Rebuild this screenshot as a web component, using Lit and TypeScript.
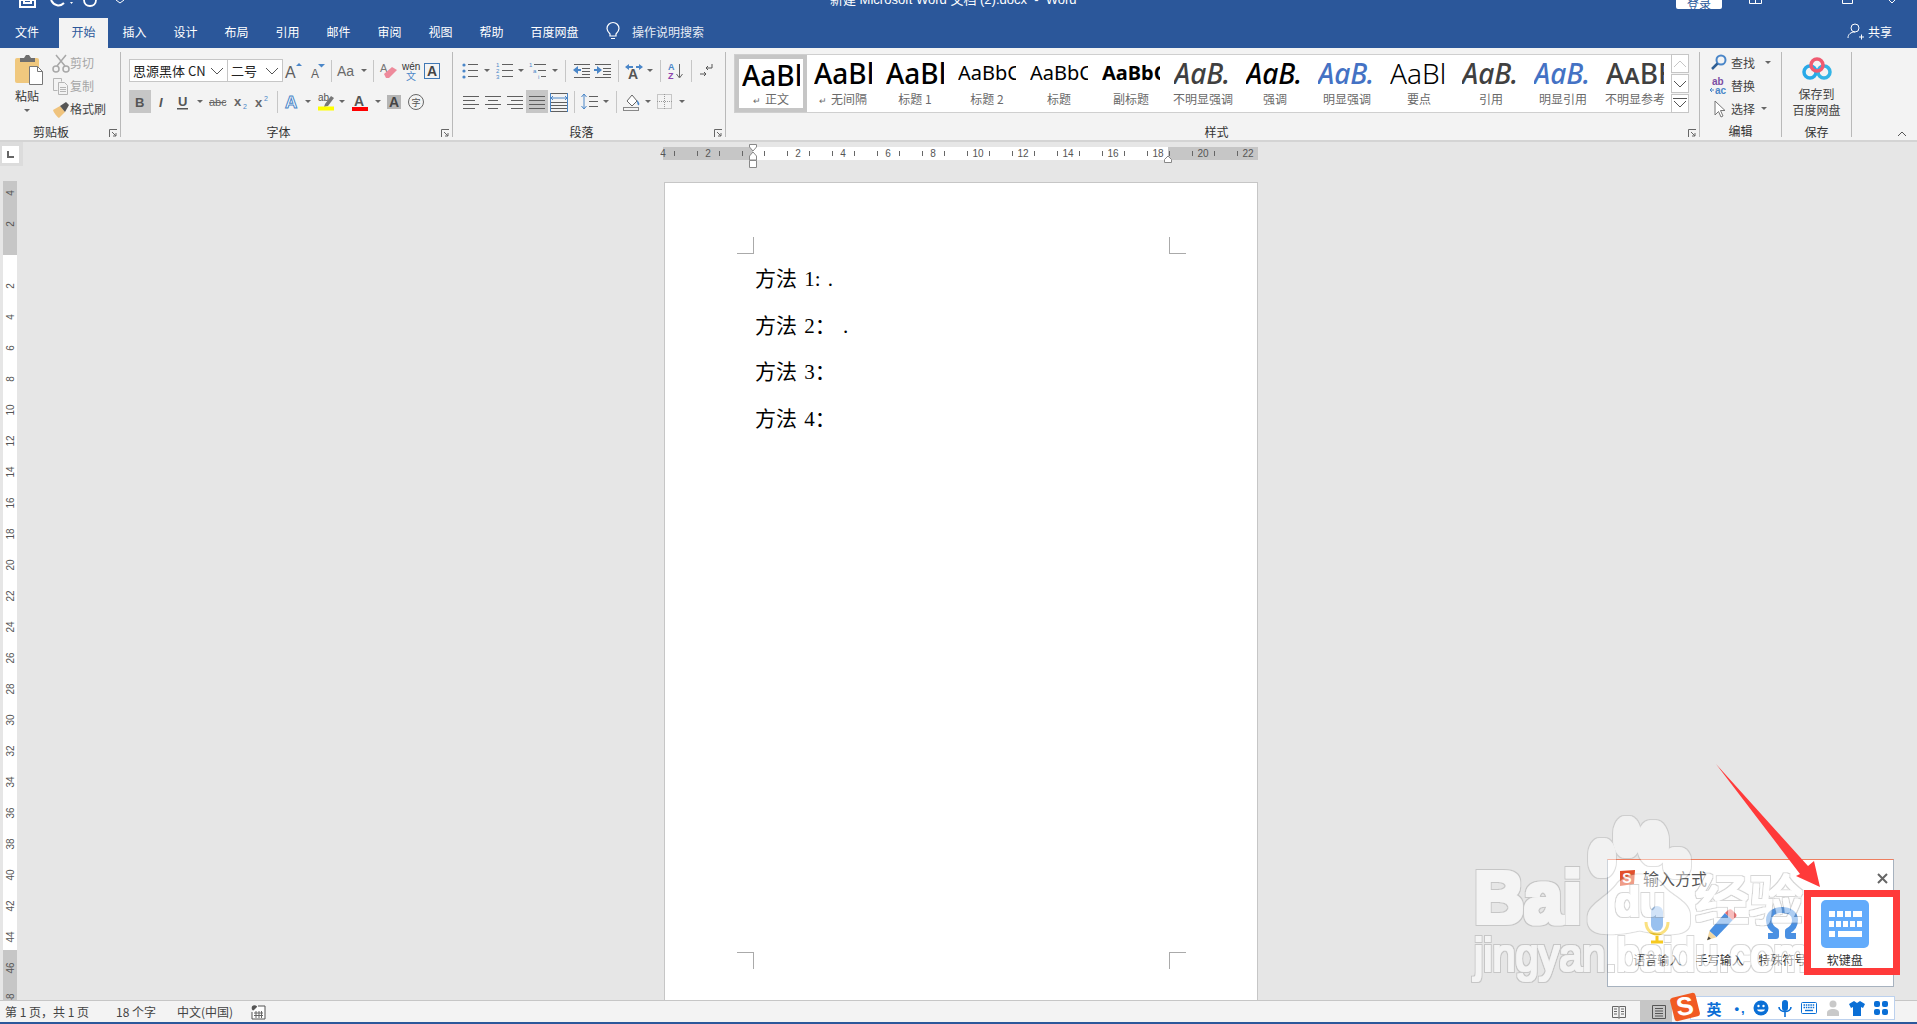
import { LitElement, html, svg, css, nothing } from 'lit'
import { customElement } from 'lit/decorators.js'

const G = '#5f5f5f'
const B = '#4a86c8'

// line list helper for the small paragraph glyphs
const lines = (rows: number[][], color = G) =>
  svg`${rows.map(
    ([x1, y, x2]) => svg`<rect x=${x1} y=${y} width=${x2 - x1} height="1" fill=${color}></rect>`
  )}`

const dots = (ys: number[]) => svg`${ys.map((y) => svg`<circle cx="4" cy=${y} r="1.6" fill=${B}></circle>`)}`

const label = (x: number, y: number, t: string, size: number, fill = G, extra = '') =>
  svg`<text x=${x} y=${y} font-size=${size} fill=${fill} font-family="Liberation Sans, sans-serif" style=${extra}>${t}</text>`

const ICONS: Record<string, any> = {
  grow: svg`${label(1, 17, 'A', 16)}<path d="M12 5l3-3 3 3z" fill=${B}></path>`,
  shrink: svg`${label(4, 17, 'A', 12)}<path d="M11 3h7l-3.500 3.500z" fill=${B}></path>`,
  aa: svg`${label(0, 15, 'Aa', 14, '#6a6a6a')}`,
  eraser: svg`${label(1, 11, 'A', 11, '#777')}<path d="M5 13l8-7 5 3-8 8-3 0z" fill="#ee8a9b"></path>`,
  wen: svg`${label(1, 9, 'wén', 10, '#333')}<text x="5" y="19" font-size="10" fill=${B} font-family="Noto Sans CJK SC">文</text>`,
  boxA: svg`<rect x="2.500" y="2.500" width="15" height="15" fill="none" stroke="#3f78b5"></rect>${label(5, 15, 'A', 14, '#444', 'font-weight:700')}`,
  bold: svg`${label(5, 15, 'B', 13, '#555', 'font-weight:700')}`,
  italic: svg`${label(7, 15, 'I', 13, '#555', 'font-style:italic;font-weight:700')}`,
  under: svg`${label(5, 14, 'U', 13, '#555', 'font-weight:700')}<rect x="4" y="16" width="11" height="1.500" fill="#555"></rect>`,
  abc: svg`${label(1, 14, 'abc', 11, '#666')}<rect x="1" y="10" width="17" height="1" fill="#666"></rect>`,
  sub: svg`${label(3, 14, 'x', 13, '#666', 'font-weight:700')}${label(12, 17, '2', 7, B)}`,
  sup: svg`${label(3, 15, 'x', 13, '#666', 'font-weight:700')}${label(12, 9, '2', 7, B)}`,
  fx: svg`<text x="3" y="16" font-size="17" fill="#fff" stroke="#4a86c8" font-weight="700" font-family="Liberation Sans">A</text>`,
  hl: svg`${label(2, 9, 'ab', 10, '#555')}<path d="M9 12l6-8 3 2-6 8-4 1z" fill="#777"></path><rect x="2" y="14.500" width="16" height="4" fill="#ffff00"></rect>`,
  color: svg`${label(4, 14, 'A', 14, '#555', 'font-weight:700')}<rect x="2" y="15" width="16" height="4" fill="#f00"></rect>`,
  shade: svg`<rect x="3" y="3" width="14" height="14" fill="#b5b5b5"></rect>${label(5, 15, 'A', 14, '#444', 'font-weight:700')}`,
  circ: svg`<circle cx="10" cy="10" r="7.500" fill="none" stroke="#666"></circle><text x="5.500" y="14" font-size="9" fill="#555" font-family="Noto Sans CJK SC">字</text>`,
  bul: svg`${dots([4, 10, 16])}${lines([[8, 3, 18], [8, 9, 18], [8, 15, 18]])}`,
  num: svg`${label(1, 6, '1', 6, B)}${label(1, 12, '2', 6, B)}${label(1, 18, '3', 6, B)}${lines([[7, 3, 18], [7, 9, 18], [7, 15, 18]])}`,
  multi: svg`${label(0, 6, '1', 6, B)}${label(4, 12, 'a', 6, B)}${label(9, 18, 'i', 6, B)}${lines([[5, 3, 17], [9, 9, 17], [12, 15, 17]])}`,
  dec: svg`<path d="M1 9l5-4v3h3v2H6v3z" fill=${B}></path>${lines([[2, 3, 18], [10, 7, 18], [10, 10, 18], [10, 13, 18], [2, 16, 18]])}`,
  inc: svg`<path d="M9 9L4 5v3H1v2h3v3z" fill=${B}></path>${lines([[2, 3, 18], [10, 7, 18], [10, 10, 18], [10, 13, 18], [2, 16, 18]])}`,
  asian: svg`<path d="M1 6l4-3v2h4v2H5v2zM19 6l-4-3v2h-3v2h3v2z" fill=${B}></path>${label(4, 18, 'A', 14, '#555', 'font-weight:700')}`,
  sort: svg`${label(2, 9, 'A', 9, B, 'font-weight:700')}${label(2, 18, 'Z', 9, '#8e44ad', 'font-weight:700')}<path d="M13.500 3v13M10.500 13l3 4 3-4" fill="none" stroke="#666"></path>`,
  marks: svg`<path d="M15 3v4H9M11 5L9 7l2 2M3 13h6M7 11l2 2-2 2" fill="none" stroke="#555"></path>`,
  left: svg`${lines([[2, 4, 18], [2, 8, 14], [2, 12, 18], [2, 16, 14]])}`,
  center: svg`${lines([[2, 4, 18], [5, 8, 15], [2, 12, 18], [5, 16, 15]])}`,
  right: svg`${lines([[2, 4, 18], [6, 8, 18], [2, 12, 18], [6, 16, 18]])}`,
  just: svg`${lines([[2, 4, 18], [2, 8, 18], [2, 12, 18], [2, 16, 18]])}`,
  dist: svg`<path d="M4 4l-2 2 2 2M16 4l2 2-2 2M2 6h16" fill="none" stroke=${B}></path>${lines([[2, 1, 18], [2, 10, 18], [2, 13, 18], [2, 16, 18], [2, 19, 18]])}<rect x="1" y="1" width="1" height="19" fill=${B}></rect><rect x="18" y="1" width="1" height="19" fill=${B}></rect>`,
  ls: svg`<path d="M4 2v15M1.500 5L4 2l2.500 3M1.500 14L4 17l2.500-3" fill="none" stroke=${B}></path>${lines([[9, 4, 18], [9, 9, 18], [9, 14, 18]])}`,
  fill: svg`<path d="M5 9l5-6 5 6-5 5z" fill="#fff" stroke="#666"></path><path d="M15 8c2 2 3 4 2 5s-2-1-2-5z" fill=${B}></path><rect x="1.500" y="15.500" width="15" height="3" fill="none" stroke="#888"></rect>`,
  border: svg`<rect x="2.500" y="2.500" width="14" height="14" fill="none" stroke="#999" stroke-dasharray="1 1"></rect><path d="M9.500 2v15M2 9.500h15" stroke="#999" stroke-dasharray="1 1"></path>`,
  scissor: svg`<path d="M4 1l9 11M14 1L5 12" stroke="#a8a8a8" stroke-width="1.500" fill="none"></path><circle cx="4" cy="15" r="3" fill="none" stroke="#a8a8a8" stroke-width="1.500"></circle><circle cx="14" cy="15" r="3" fill="none" stroke="#a8a8a8" stroke-width="1.500"></circle>`,
  copy: svg`<path d="M1.500 1.500h8v3M1.500 1.500v12h4" fill="none" stroke="#b5b5b5"></path><path d="M6.500 5.500h6l3 3v9h-9z" fill="none" stroke="#b5b5b5"></path>${lines([[8, 10, 14], [8, 12, 14], [8, 14, 14]], '#b5b5b5')}`,
  brush: svg`<path d="M1 10l7-4 5 6-6 6c-2-1-5-5-6-8z" fill="#efc37d"></path><path d="M8 6l6-4 3 3-4 7z" fill="#555"></path>`,
  find: svg`<circle cx="12" cy="7" r="4.500" fill="none" stroke=${B} stroke-width="2"></circle><path d="M8.500 10.500L3 16" stroke="#2f5f94" stroke-width="2.500"></path>`,
  replace: svg`${label(3, 9, 'ab', 10, '#7d4ea3', 'font-weight:700')}${label(6, 18, 'ac', 10, B, 'font-weight:700')}<path d="M1 14h4M3 12l-2 2 2 2" fill="none" stroke=${B}></path>`,
  select: svg`<path d="M6 2v14l3.500-3.500 2.500 5.500 2-1-2.500-5.500H16z" fill="#fff" stroke="#777"></path>`,
}

const icon = (name: string) => html`<svg class="ico" width="20" height="20" viewBox="0 0 20 20">${ICONS[name]}</svg>`

type Tool = { w: number; kind: 'i' | 'c' | 's'; name?: string; on?: boolean }
const t = (w: number, name: string, on = false): Tool => ({ w, kind: 'i', name, on })
const c = (w: number): Tool => ({ w, kind: 'c' })
const s = (w: number): Tool => ({ w, kind: 's' })

const FONT_TOP = [t(22, 'grow'), t(23, 'shrink'), s(6), t(26, 'aa'), c(8), s(10), t(22, 'eraser'), t(22, 'wen'), t(20, 'boxA')]
const FONT_BOTTOM = [
  t(22, 'bold', true), t(21, 'italic'), t(22, 'under'), c(12), t(24, 'abc'), t(21, 'sub'), t(22, 'sup'), s(8),
  t(22, 'fx'), c(10), t(26, 'hl'), c(6), t(30, 'color'), c(6), t(26, 'shade'), t(18, 'circ'),
]
const PARA_TOP = [
  t(20, 'bul'), c(14), t(22, 'num'), c(10), t(26, 'multi'), c(6), s(14), t(20, 'dec'), t(22, 'inc'), s(8),
  t(24, 'asian'), c(8), s(12), t(20, 'sort'), s(10), t(22, 'marks'),
]
const PARA_BOTTOM = [
  t(22, 'left'), t(22, 'center'), t(22, 'right'), t(22, 'just', true), t(22, 'dist'), s(8), t(24, 'ls'), c(8),
  s(12), t(20, 'fill'), c(12), t(22, 'border'), c(12),
]

const TABS = ['插入', '设计', '布局', '引用', '邮件', '审阅', '视图', '帮助']

const STYLES = [
  { s: 'AaBl', l: '正文', c: 'big', p: true, on: true },
  { s: 'AaBl', l: '无间隔', c: 'big', p: true },
  { s: 'AaBl', l: '标题 1', c: 'big' },
  { s: 'AaBbC', l: '标题 2', c: 'mid' },
  { s: 'AaBbC', l: '标题', c: 'mid' },
  { s: 'AaBbC', l: '副标题', c: 'mid heavy' },
  { s: 'AaB.', l: '不明显强调', c: 'big it grey' },
  { s: 'AaB.', l: '强调', c: 'big it' },
  { s: 'AaB.', l: '明显强调', c: 'big it blue' },
  { s: 'AaBl', l: '要点', c: 'big thin' },
  { s: 'AaB.', l: '引用', c: 'big it grey' },
  { s: 'AaB.', l: '明显引用', c: 'big it blue' },
  { s: 'AaBE', l: '不明显参考', c: 'big grey caps' },
]

const DOC_LINES = ['方法 1: .', '方法 2： .', '方法 3：', '方法 4：']

const range = (a: number, b: number, step = 1) => {
  const out: number[] = []
  for (let i = a; i <= b; i += step) out.push(i)
  return out
}

@customElement('app-root')
export class AppRoot extends LitElement {
  static styles = css`
    :host {
      display: flex;
      flex-direction: column;
      position: relative;
      width: 1917px;
      height: 1024px;
      overflow: hidden;
      background: #e6e6e6;
      font-family: 'Noto Sans CJK SC', 'Liberation Sans', sans-serif;
      font-size: 12px;
      color: #444;
    }

    .ico {
      flex: none;
      overflow: visible;
      display: block;
    }

    /* window title strip, cut off by the top of the shot */
    .titlebar {
      height: 18px;
      flex: none;
      background: #2b579a;
      display: flex;
      overflow: hidden;
      color: #fff;
    }

    .qa {
      width: 830px;
      flex: none;
      position: relative;
      display: flex;
      gap: 12px;
      padding-left: 20px;
      box-sizing: border-box;
    }

    .doc-title {
      width: 846px;
      flex: none;
      font: 13px/16px 'Liberation Sans', 'Noto Sans CJK SC', sans-serif;
      margin-top: -8px;
      white-space: pre;
    }

    .login {
      width: 46px;
      height: 9px;
      flex: none;
      background: #fff;
      border-radius: 0 0 2px 2px;
      color: #2b579a;
      text-align: center;
      line-height: 8px;
      overflow: hidden;
    }

    .win {
      flex: none;
      display: block;
    }

    .tabs {
      height: 30px;
      flex: none;
      background: #2b579a;
      color: #fff;
      display: flex;
      align-items: stretch;
    }

    .tab {
      width: 51px;
      flex: none;
      display: flex;
      align-items: center;
      justify-content: center;
      box-sizing: border-box;
      padding-bottom: 4px;
    }

    .tab.file {
      width: 54px;
      margin-right: 5px;
    }

    .tab.on {
      width: 49px;
      margin-right: 1px;
      background: #f3f3f3;
      color: #2b579a;
    }

    .tab.pan {
      width: 75px;
    }

    .tell {
      display: flex;
      align-items: center;
      margin-left: 14px;
      gap: 12px;
      color: #e8edf5;
      padding-bottom: 4px;
    }

    .share {
      margin-left: auto;
      margin-right: 25px;
      display: flex;
      align-items: center;
      gap: 3px;
      padding-bottom: 4px;
    }

    /* ribbon */
    .ribbon {
      height: 94px;
      flex: none;
      box-sizing: border-box;
      background: #f3f3f3;
      border-bottom: 2px solid #d4d4d4;
      display: flex;
      position: relative;
    }

    .group {
      height: 85px;
      margin-top: 4px;
      flex: none;
      box-sizing: border-box;
      border-right: 1px solid #b9b9b9;
      display: flex;
      flex-direction: column;
    }

    .g-clip { width: 121px; padding-right: 18px; }
    .g-font { width: 332px; padding-left: 8px; padding-right: 24px; }
    .g-para { width: 273px; padding-left: 7px; padding-right: 22px; }
    .g-style { width: 974px; padding-left: 8px; }
    .g-edit { width: 82px; }
    .g-save { width: 70px; }

    .body {
      height: 74px;
      flex: none;
    }

    .stack {
      padding-top: 7px;
      box-sizing: border-box;
      display: flex;
      flex-direction: column;
      gap: 8px;
    }

    .row {
      height: 23px;
      display: flex;
      align-items: center;
    }

    .tool {
      height: 23px;
      flex: none;
      display: flex;
      align-items: center;
      justify-content: center;
    }

    .tool.on {
      background: #c6c6c6;
    }

    .caret {
      width: 0;
      height: 0;
      border: 3px solid transparent;
      border-top: 3px solid #666;
      border-bottom: 0;
    }

    .vsep {
      width: 1px;
      height: 22px;
      background: #c6c6c6;
    }

    .combo {
      height: 23px;
      box-sizing: border-box;
      background: #fff;
      border: 1px solid #c6c6c6;
      display: flex;
      align-items: center;
      justify-content: space-between;
      padding: 0 3px;
      font-size: 13px;
      color: #222;
      flex: none;
    }

    .combo + .combo {
      border-left: 0;
    }

    .name {
      height: 11px;
      line-height: 12px;
      flex: none;
      position: relative;
      text-align: center;
      color: #333;
    }

    .launcher {
      position: absolute;
      right: 2px;
      bottom: -1px;
      display: block;
    }

    .g-clip .launcher { right: -16px; }
    .g-font .launcher { right: -22px; }
    .g-para .launcher { right: -20px; }

    /* clipboard */
    .clip-body {
      display: flex;
    }

    .paste {
      width: 52px;
      flex: none;
      display: flex;
      flex-direction: column;
      align-items: center;
      padding: 3px 0 0 2px;
      box-sizing: border-box;
      color: #333;
    }

    .paste .ico {
      margin-left: 3px;
    }

    .paste .tx {
      margin-top: 2px;
      line-height: 17px;
      font-size: 12px;
    }

    .paste .caret {
      margin-top: 5px;
    }

    .small {
      display: flex;
      flex-direction: column;
      margin-top: -1px;
      white-space: nowrap;
    }

    .small .row {
      color: #444;
    }

    .small .off {
      color: #a6a6a6;
    }

    /* style gallery */
    .gallery {
      display: flex;
      height: 59px;
      margin-top: 2px;
      width: 956px;
    }

    .cards {
      display: flex;
      background: #fff;
      border: 1px solid #cfcfcf;
      border-width: 1px 0 1px 1px;
      flex: none;
    }

    .card {
      width: 72px;
      height: 57px;
      box-sizing: border-box;
      flex: none;
      display: flex;
      flex-direction: column;
      align-items: center;
    }

    .card.on {
      border: 4px solid #c6c6c6;
    }

    .sample {
      width: 58px;
      height: 35px;
      overflow: hidden;
      white-space: nowrap;
      font-family: 'Noto Sans', 'Liberation Sans', sans-serif;
      color: #000;
      line-height: 36px;
      flex: none;
    }

    .card.on .sample {
      height: 31px;
      line-height: 32px;
    }

    .sample.big { font-size: 28px; font-weight: 500; }
    .sample.mid { font-size: 20px; }
    .sample.heavy { font-weight: 700; }
    .sample.it { font-style: italic; }
    .sample.grey { color: #404040; }
    .sample.blue { color: #4472c4; }
    .sample.thin { font-weight: 300; }
    .sample.caps { font-variant: small-caps; }

    .cap {
      color: #6a6a6a;
      white-space: nowrap;
      line-height: 18px;
    }

    .cap .ret {
      font-size: 9px;
      margin-right: 4px;
    }

    .spin {
      width: 18px;
      flex: none;
      display: flex;
      flex-direction: column;
      gap: 1px;
    }

    .spin span {
      flex: 1;
      box-sizing: border-box;
      background: #fff;
      border: 1px solid #c6c6c6;
      display: flex;
      align-items: center;
      justify-content: center;
    }

    .edit-rows {
      display: flex;
      flex-direction: column;
      margin-top: -1px;
      padding-left: 9px;
    }

    .edit-rows .row {
      gap: 2px;
      color: #444;
    }

    .edit-rows .caret {
      margin-left: 8px;
    }

    .save {
      display: flex;
      flex-direction: column;
      align-items: center;
      padding-top: 5px;
      box-sizing: border-box;
      line-height: 16px;
      color: #444;
      gap: 5px;
    }

    .save .tx {
      text-align: center;
    }

    .collapse {
      position: absolute;
      left: 1897px;
      top: 83px;
    }

    /* document area */
    .main {
      height: 858px;
      flex: none;
      overflow: hidden;
      display: flex;
      flex-direction: column;
    }

    .rulerline {
      height: 39px;
      flex: none;
      display: flex;
    }

    .corner {
      width: 23px;
      height: 24px;
      flex: none;
      background: #dcdcdc;
      display: flex;
      align-items: center;
      justify-content: flex-start;
      padding-left: 2px;
      box-sizing: border-box;
    }

    .corner span {
      width: 17px;
      height: 17px;
      background: #fff;
      position: relative;
      display: block;
    }

    .corner span::after {
      content: '';
      position: absolute;
      left: 5px;
      top: 5px;
      width: 5px;
      height: 5px;
      border-left: 2px solid #666;
      border-bottom: 2px solid #666;
    }

    .hruler {
      margin-left: 637px;
      display: block;
      flex: none;
    }

    .work {
      display: flex;
      flex: 1;
      min-height: 0;
    }

    .vruler {
      flex: none;
      display: block;
    }

    .page {
      position: relative;
      margin: 1px 0 0 647px;
      width: 594px;
      height: 960px;
      box-sizing: border-box;
      flex: none;
      background: #fff;
      border: 1px solid #c6c6c6;
      padding: 73px 0 0 90px;
      color: #000;
    }

    .line {
      height: 46.500px;
      font: 21px/46.500px 'Liberation Serif', 'Noto Sans CJK SC', serif;
      word-spacing: 2px;
      white-space: pre;
    }

    .crop {
      position: absolute;
      width: 17px;
      height: 17px;
      box-sizing: border-box;
      border: 0 solid #aaa;
    }

    .crop.tl { left: 72px; top: 54px; border-width: 0 1px 1px 0; }
    .crop.tr { left: 504px; top: 54px; border-width: 0 0 1px 1px; }
    .crop.bl { left: 72px; top: 769px; border-width: 1px 1px 0 0; }
    .crop.br { left: 504px; top: 769px; border-width: 1px 0 0 1px; }

    /* status bar */
    .status {
      height: 22px;
      flex: none;
      box-sizing: border-box;
      background: #f3f3f3;
      border-top: 1px solid #c6c6c6;
      display: flex;
      align-items: center;
      padding-left: 5px;
      color: #444;
    }

    .status .a { width: 111px; flex: none; }
    .status .b { width: 61px; flex: none; }
    .status .d { width: 74px; flex: none; }

    .view {
      width: 32px;
      height: 21px;
      flex: none;
      display: flex;
      align-items: center;
      justify-content: center;
    }

    .view.read { margin-left: 1338px; margin-right: 5px; }
    .view.on { background: #c6c6c6; justify-content: flex-start; padding-left: 12px; box-sizing: border-box; }

    .edge {
      height: 2px;
      flex: none;
      background: #2b579a;
    }

    /* floating things over the bottom right corner */
    .ime {
      position: absolute;
      left: 1607px;
      top: 859px;
      width: 287px;
      height: 128px;
      box-sizing: border-box;
      background: #fff;
      border: 1px solid #a7b2bf;
      border-top-color: #ee7f5f;
    }

    .ime-head {
      height: 36px;
      display: flex;
      align-items: center;
      gap: 6px;
      padding-left: 9px;
      font-size: 16px;
      color: #555;
    }

    .ime-x {
      margin-left: auto;
      margin-right: 5px;
    }

    .ime-items {
      display: flex;
      padding-left: 18px;
    }

    .ime-item {
      width: 62.500px;
      display: flex;
      flex-direction: column;
      align-items: center;
      flex: none;
      gap: 4px;
      color: #333;
      line-height: 16px;
      margin-top: 4px;
    }

    .key-tile {
      width: 48px;
      height: 48px;
    }

    .watermark {
      position: absolute;
      left: 1450px;
      top: 800px;
      pointer-events: none;
    }

    .redbox {
      position: absolute;
      left: 1804px;
      top: 890px;
      width: 96px;
      height: 85px;
      box-sizing: border-box;
      border: 7px solid #ff3a3a;
    }

    .arrow {
      position: absolute;
      left: 1700px;
      top: 750px;
    }

    .sogou {
      position: absolute;
      left: 1690px;
      top: 996px;
      width: 205px;
      height: 24px;
      box-sizing: border-box;
      background: #fff;
      border: 1px solid #bcd1ee;
      display: flex;
      align-items: center;
      padding-left: 10px;
      color: #0a6fd6;
    }

    .sogou .zh {
      font-size: 15px;
      font-weight: 700;
      width: 26px;
      flex: none;
      text-align: center;
      margin-right: 5px;
    }

    .sogou .punct {
      width: 17px;
      flex: none;
      text-align: center;
      font: 700 13px 'Liberation Sans', sans-serif;
      letter-spacing: 2px;
    }

    .sogou .cell {
      width: 24px;
      flex: none;
      display: flex;
      justify-content: center;
    }

    .sglogo {
      position: absolute;
      left: 1668px;
      top: 991px;
    }
  `

  private _tools(list: Tool[]) {
    return list.map((it) => {
      if (it.kind === 's') {
        return html`<span class="tool" style="width:${it.w}px"><span class="vsep"></span></span>`
      }
      if (it.kind === 'c') {
        return html`<span class="tool" style="width:${it.w}px"><span class="caret"></span></span>`
      }
      return html`<span class="tool ${it.on ? 'on' : ''}" style="width:${it.w}px">${icon(it.name!)}</span>`
    })
  }

  private _launcher() {
    return html`<svg class="launcher" width="9" height="9" viewBox="0 0 9 9">
      <path d="M0.500 8V0.500H8M3 3l4 4M7 4v3H4" fill="none" stroke="#666"></path>
    </svg>`
  }

  private _chev() {
    return html`<svg width="14" height="8" viewBox="0 0 14 8" class="ico"><path d="M1 1l6 6 6-6" fill="none" stroke="#555"></path></svg>`
  }

  private _titlebar() {
    return html`
      <div class="titlebar">
        <div class="qa">
          <svg width="106" height="10" viewBox="0 0 106 10" class="ico">
            <path d="M0 0h15v7H0zM4 0v3h7V0" fill="none" stroke="#fff" stroke-width="2"></path>
            <path d="M31 0c3 6 9 7 13 3" fill="none" stroke="#fff" stroke-width="2"></path>
            <path d="M50 2h3l-1.500 2z" fill="#fff"></path>
            <path d="M64 0c0 8 12 8 12 0" fill="none" stroke="#fff" stroke-width="1.800"></path>
            <path d="M96 0l4 3 4-3" fill="none" stroke="#fff"></path>
          </svg>
        </div>
        <div class="doc-title">新建 Microsoft Word 文档 (2).docx  -  Word</div>
        <div class="login">登录</div>
        <svg class="win" width="195" height="6" viewBox="0 0 195 6">
          <path d="M27.500 0v3.500h12V0M33.500 0v3.500" fill="none" stroke="#fff"></path>
          <path d="M120.500 0v3.500h10V0" fill="none" stroke="#fff"></path>
          <path d="M167 0l3 3 3-3" fill="none" stroke="#fff"></path>
        </svg>
      </div>
    `
  }

  private _tabs() {
    return html`
      <div class="tabs">
        <div class="tab file">文件</div>
        <div class="tab on">开始</div>
        ${TABS.map((n) => html`<div class="tab">${n}</div>`)}
        <div class="tab pan">百度网盘</div>
        <div class="tell">
          <svg width="14" height="18" viewBox="0 0 14 18" class="ico">
            <path d="M4 12C2 10 1 8.500 1 6.500a6 6 0 0 1 12 0c0 2-1 3.500-3 5.500v2H4zM5 16.500h4" fill="none" stroke="#fff" stroke-width="1.200"></path>
          </svg>
          <span>操作说明搜索</span>
        </div>
        <div class="share">
          <svg width="18" height="18" viewBox="0 0 18 18" class="ico">
            <circle cx="8" cy="6" r="4" fill="none" stroke="#fff"></circle>
            <path d="M1 16c0-4 3-6 7-6M12 15h5M14.500 12.500v5" fill="none" stroke="#fff"></path>
          </svg>
          <span>共享</span>
        </div>
      </div>
    `
  }

  private _clipboard() {
    return html`
      <div class="group g-clip">
        <div class="body clip-body">
          <div class="paste">
            <svg width="30" height="30" viewBox="0 0 30 30" class="ico">
              <rect x="1" y="3" width="24" height="25" rx="2" fill="#f0c87e"></rect>
              <path d="M6 3h4l2-3h3l2 3h4v4H6z" fill="#6e6e6e"></path>
              <path d="M15.500 11.500h8l5 5v13h-13z" fill="#fff" stroke="#777"></path>
              <path d="M23.500 11.500v5h5" fill="none" stroke="#777"></path>
            </svg>
            <span class="tx">粘贴</span>
            <span class="caret"></span>
          </div>
          <div class="small">
            <div class="row off"><svg width="18" height="18" viewBox="0 0 18 18" class="ico">${ICONS.scissor}</svg><span>剪切</span></div>
            <div class="row off"><svg width="18" height="18" viewBox="0 0 18 18" class="ico">${ICONS.copy}</svg><span>复制</span></div>
            <div class="row"><svg width="18" height="18" viewBox="0 0 18 18" class="ico">${ICONS.brush}</svg><span>格式刷</span></div>
          </div>
        </div>
        <div class="name">剪贴板${this._launcher()}</div>
      </div>
    `
  }

  private _font() {
    return html`
      <div class="group g-font">
        <div class="body stack">
          <div class="row">
            <div class="combo" style="width:99px"><span>思源黑体 CN</span>${this._chev()}</div>
            <div class="combo" style="width:55px"><span>二号</span>${this._chev()}</div>
            ${this._tools(FONT_TOP)}
          </div>
          <div class="row">${this._tools(FONT_BOTTOM)}</div>
        </div>
        <div class="name">字体${this._launcher()}</div>
      </div>
    `
  }

  private _paragraph() {
    return html`
      <div class="group g-para">
        <div class="body stack">
          <div class="row">${this._tools(PARA_TOP)}</div>
          <div class="row">${this._tools(PARA_BOTTOM)}</div>
        </div>
        <div class="name">段落${this._launcher()}</div>
      </div>
    `
  }

  private _styles() {
    return html`
      <div class="group g-style">
        <div class="body">
          <div class="gallery">
            <div class="cards">
              ${STYLES.map(
                (st) => html`
                  <div class="card ${st.on ? 'on' : ''}">
                    <div class="sample ${st.c}">${st.s}</div>
                    <div class="cap">${st.p ? html`<span class="ret">↵</span>` : nothing}${st.l}</div>
                  </div>
                `
              )}
            </div>
            <div class="spin">
              <span><svg width="14" height="8" viewBox="0 0 14 8"><path d="M1 7l6-6 6 6" fill="none" stroke="#c6c6c6"></path></svg></span>
              <span><svg width="14" height="8" viewBox="0 0 14 8"><path d="M1 1l6 6 6-6" fill="none" stroke="#555"></path></svg></span>
              <span><svg width="14" height="11" viewBox="0 0 14 11"><path d="M0 0.500h14M1 3l6 6 6-6" fill="none" stroke="#555"></path></svg></span>
            </div>
          </div>
        </div>
        <div class="name">样式${this._launcher()}</div>
      </div>
    `
  }

  private _editing() {
    return html`
      <div class="group g-edit">
        <div class="body edit-rows">
          <div class="row">${icon('find')}<span>查找</span><span class="caret"></span></div>
          <div class="row">${icon('replace')}<span>替换</span></div>
          <div class="row">${icon('select')}<span>选择</span><span class="caret" style="margin-left:4px"></span></div>
        </div>
        <div class="name">编辑</div>
      </div>
    `
  }

  private _save() {
    return html`
      <div class="group g-save">
        <div class="body save">
          <svg width="30" height="24" viewBox="0 0 30 24" class="ico">
            <circle cx="8" cy="15" r="6" fill="none" stroke="#28a9e8" stroke-width="3.500"></circle>
            <circle cx="22" cy="15" r="6" fill="none" stroke="#32b4e6" stroke-width="3.500"></circle>
            <circle cx="15" cy="8" r="6" fill="none" stroke="#ef5a70" stroke-width="3.500"></circle>
          </svg>
          <div class="tx">保存到<br />百度网盘</div>
        </div>
        <div class="name">保存</div>
      </div>
    `
  }

  private _hruler() {
    const X0 = 93
    const nums = range(-4, 22, 2).filter((n) => n !== 0)
    const ticks = range(-7, 44, 1).filter((n) => n % 2 !== 0)
    return html`
      <svg class="hruler" width="620" height="39" viewBox="0 0 620 39">
        <rect x="3" y="5" width="595" height="13" fill="#c6c6c6"></rect>
        <rect x="93" y="5" width="415" height="13" fill="#fff"></rect>
        ${ticks.map((n) => {
          const x = Math.round(X0 + 11.25 * n)
          return svg`<rect x=${x} y="9" width="1" height="5" fill="#666"></rect>`
        })}
        ${nums.map(
          (n) => svg`<text x=${X0 + 22.5 * n} y="15" text-anchor="middle" font-size="10" fill="#555" font-family="Liberation Sans, sans-serif">${Math.abs(n)}</text>`
        )}
        <path d="M89.500 2.500h7V5l-3.500 4-3.500-4zM89.500 18V14l3.500-4 3.500 4v4zM89.500 18.500h7v7h-7z" fill="#fff" stroke="#888"></path>
        <path d="M504.500 20.500v-3l3.500-3.500 3.500 3.500v3z" fill="#fff" stroke="#888"></path>
      </svg>
    `
  }

  private _vruler() {
    const Y0 = 74
    const nums = range(-4, 48, 2).filter((n) => n !== 0)
    return html`
      <svg class="vruler" width="17" height="819" viewBox="0 0 17 819">
        <rect x="3" y="0" width="14" height="819" fill="#c6c6c6"></rect>
        <rect x="3" y="74" width="14" height="695" fill="#fff"></rect>
        ${nums.map((n) => {
          const y = Y0 + 15.5 * n
          return svg`<text x="10" y=${y + 3.5} transform="rotate(-90 10 ${y})" text-anchor="middle" font-size="10" fill="#555" font-family="Liberation Sans, sans-serif">${Math.abs(n)}</text>`
        })}
      </svg>
    `
  }

  private _statusbar() {
    return html`
      <div class="status">
        <span class="a">第 1 页，共 1 页</span>
        <span class="b">18 个字</span>
        <span class="d">中文(中国)</span>
        <svg width="14" height="14" viewBox="0 0 14 14" class="ico">
          <circle cx="3.500" cy="3" r="2.800" fill="#555"></circle>
          <path d="M7 1h7v13H1V7" fill="#fff" stroke="#555"></path>
          <path d="M3 8h9M3 10.500h9M5 6v7M8 6v7M10.500 6v7" stroke="#666"></path>
        </svg>
        <div class="view read">
          <svg width="16" height="14" viewBox="0 0 16 14"><path d="M1.500 1.500h6l.5 1 .5-1h6v11h-6l-.5 1-.5-1h-6zM8 2.500v10M3 4h3M3 6.500h3M3 9h3M10 4h3M10 6.500h3M10 9h3" fill="none" stroke="#666"></path></svg>
        </div>
        <div class="view on">
          <svg width="15" height="14" viewBox="0 0 15 14"><path d="M.5.500h13v13H.5zM3 3.500h8M3 6h8M3 8.500h8M3 11h8" fill="none" stroke="#555"></path></svg>
        </div>
      </div>
      <div class="edge"></div>
    `
  }

  private _ime() {
    return html`
      <div class="ime">
        <div class="ime-head">
          <svg width="20" height="20" viewBox="0 0 20 20" class="ico">
            <path d="M3 3l15-1-1 14-14 2z" fill="#e2502c"></path>
            <text x="10" y="14.500" text-anchor="middle" font-size="14" font-weight="700" fill="#fff" font-family="Liberation Sans">S</text>
          </svg>
          <span>输入方式</span>
          <svg class="ime-x ico" width="11" height="11" viewBox="0 0 11 11"><path d="M1 1l9 9M10 1l-9 9" stroke="#666" stroke-width="2"></path></svg>
        </div>
        <div class="ime-items">
          <div class="ime-item">
            <svg class="key-tile" viewBox="0 0 48 48">
              <rect x="18" y="6" width="12" height="25" rx="6" fill="#4a90e2"></rect>
              <path d="M13 22c0 16 22 16 22 0" fill="none" stroke="#f6c91f" stroke-width="3"></path>
              <path d="M24 36v6M18 42h12" stroke="#f6c91f" stroke-width="3"></path>
            </svg>
            <span>语音输入</span>
          </div>
          <div class="ime-item">
            <svg class="key-tile" viewBox="0 0 48 48">
              <g transform="translate(4 6) scale(.78)">
                <path d="M12 32L32 9l10 9-21 22z" fill="#4a90e2"></path>
                <path d="M32 9l4-4c2-1 4-1 5 0l5 5c1 1 1 3 0 4l-4 4z" fill="#ef6a6a"></path>
                <path d="M12 32l9 8-12 4z" fill="#f2d7a0"></path>
                <path d="M9 44l2-5 3 3z" fill="#444"></path>
              </g>
            </svg>
            <span>手写输入</span>
          </div>
          <div class="ime-item">
            <svg class="key-tile" viewBox="0 0 48 48">
              <path d="M10 36h8v-5c-4-2-7-6-7-11 0-7 6-10 13-10s13 3 13 10c0 5-3 9-7 11v5h8" fill="none" stroke="#4a90e2" stroke-width="6" stroke-linejoin="round"></path>
            </svg>
            <span>特殊符号</span>
          </div>
          <div class="ime-item">
            <svg class="key-tile" viewBox="0 0 48 48">
              <rect width="48" height="48" rx="5" fill="#62abfb"></rect>
              ${range(0, 3).map((i) => svg`<rect x=${8 + i * 8} y="11" width="6" height="6" fill="#fff"></rect>`)}
              <rect x="32" y="11" width="9" height="6" fill="#fff"></rect>
              ${range(0, 4).map((i) => svg`<rect x=${8 + i * 7} y="21" width="5" height="6" fill="#fff"></rect>`)}
              <rect x="8" y="31" width="6" height="6" fill="#fff"></rect>
              <rect x="17" y="31" width="24" height="6" fill="#fff"></rect>
            </svg>
            <span>软键盘</span>
          </div>
        </div>
      </div>
    `
  }

  private _watermark() {
    return html`
      <svg class="watermark" width="380" height="200" viewBox="0 0 380 200">
        <defs>
          <filter id="wm" x="-10%" y="-20%" width="120%" height="140%">
            <feMorphology in="SourceAlpha" operator="dilate" radius="1.500" result="fat"></feMorphology>
            <feMorphology in="SourceAlpha" operator="dilate" radius="2.500" result="fatter"></feMorphology>
            <feFlood flood-color="#fff" flood-opacity=".55"></feFlood>
            <feComposite in2="fat" operator="in" result="body"></feComposite>
            <feComposite in="fatter" in2="fat" operator="out" result="rim"></feComposite>
            <feFlood flood-color="#888" flood-opacity=".34"></feFlood>
            <feComposite in2="rim" operator="in" result="ring"></feComposite>
            <feMerge>
              <feMergeNode in="ring"></feMergeNode>
              <feMergeNode in="body"></feMergeNode>
            </feMerge>
          </filter>
          <filter id="wmthin" x="-10%" y="-20%" width="120%" height="140%">
            <feMorphology in="SourceAlpha" operator="dilate" radius=".6" result="fat"></feMorphology>
            <feMorphology in="SourceAlpha" operator="dilate" radius="1.500" result="fatter"></feMorphology>
            <feFlood flood-color="#fff" flood-opacity=".55"></feFlood>
            <feComposite in2="fat" operator="in" result="body"></feComposite>
            <feComposite in="fatter" in2="fat" operator="out" result="rim"></feComposite>
            <feFlood flood-color="#888" flood-opacity=".34"></feFlood>
            <feComposite in2="rim" operator="in" result="ring"></feComposite>
            <feMerge>
              <feMergeNode in="ring"></feMergeNode>
              <feMergeNode in="body"></feMergeNode>
            </feMerge>
          </filter>
        </defs>
        <g filter="url(#wm)" fill="#fff" opacity=".8">
          <ellipse cx="152" cy="58" rx="12" ry="18"></ellipse>
          <ellipse cx="177" cy="37" rx="12" ry="19"></ellipse>
          <ellipse cx="203" cy="43" rx="14" ry="21"></ellipse>
          <ellipse cx="227" cy="63" rx="12" ry="14"></ellipse>
          <path d="M170 85c12-12 32-12 42 4 8 10 28 15 26 32-2 14-22 13-48 7-22 5-46 8-50-6-3-15 20-22 30-37z"></path>
        </g>
        <g filter="url(#wm)" fill="#fff" font-family="Liberation Sans, sans-serif" font-weight="700">
          <text x="24" y="123" font-size="74" textLength="108" lengthAdjust="spacingAndGlyphs">Bai</text>
        </g>
        <g filter="url(#wmthin)" fill="#fff" font-family="Liberation Sans, sans-serif">
          <text x="165" y="116" font-size="40" font-weight="700" textLength="50" lengthAdjust="spacingAndGlyphs">du</text>
          <text x="245" y="120" font-size="53" font-family="Noto Sans CJK SC" textLength="108" lengthAdjust="spacingAndGlyphs">经验</text>
          <text x="24" y="171" font-size="46" textLength="334" lengthAdjust="spacingAndGlyphs">jingyan.baidu.com</text>
        </g>
      </svg>
    `
  }

  private _sogou() {
    return html`
      <div class="sogou">
        <span class="zh">英</span>
        <span class="punct">•,</span>
        <span class="cell">
          <svg width="16" height="16" viewBox="0 0 16 16" class="ico">
            <circle cx="8" cy="8" r="7.500" fill="#0a6fd6"></circle>
            <circle cx="5.500" cy="6" r="1.200" fill="#fff"></circle>
            <circle cx="10.500" cy="6" r="1.200" fill="#fff"></circle>
            <path d="M4 9.500c1 3 7 3 8 0z" fill="#fff"></path>
          </svg>
        </span>
        <span class="cell">
          <svg width="14" height="17" viewBox="0 0 14 17" class="ico">
            <rect x="4" y="0" width="6" height="11" rx="3" fill="#0a6fd6"></rect>
            <path d="M1 7c0 6 12 6 12 0M7 12v5" fill="none" stroke="#0a6fd6" stroke-width="1.600"></path>
          </svg>
        </span>
        <span class="cell">
          <svg width="16" height="12" viewBox="0 0 16 12" class="ico">
            <rect x=".5" y=".5" width="15" height="11" rx="1" fill="#fff" stroke="#0a6fd6"></rect>
            <path d="M2.500 3h11M2.500 5.500h11" stroke="#0a6fd6" stroke-dasharray="1.500 .8" stroke-width="1.400"></path>
            <path d="M4 8.500h8" stroke="#0a6fd6" stroke-width="1.400"></path>
          </svg>
        </span>
        <span class="cell">
          <svg width="14" height="16" viewBox="0 0 14 16" class="ico">
            <circle cx="7" cy="4" r="3.500" fill="#c9c9c9"></circle>
            <path d="M1 16v-3c0-3 3-4 6-4s6 1 6 4v3z" fill="#c9c9c9"></path>
          </svg>
        </span>
        <span class="cell">
          <svg width="16" height="15" viewBox="0 0 16 15" class="ico">
            <path d="M5 0l3 2 3-2 5 3-2 4-2-1v9H4V6L2 7 0 3z" fill="#0a6fd6"></path>
          </svg>
        </span>
        <span class="cell">
          <svg width="14" height="14" viewBox="0 0 14 14" class="ico">
            <rect width="6" height="6" rx="2" fill="#0a6fd6"></rect>
            <rect x="8" width="6" height="6" rx="2" fill="#0a6fd6"></rect>
            <rect y="8" width="6" height="6" rx="2" fill="#0a6fd6"></rect>
            <rect x="8" y="8" width="6" height="6" rx="2" fill="#0a6fd6"></rect>
          </svg>
        </span>
      </div>
      <svg class="sglogo" width="34" height="32" viewBox="0 0 34 32">
        <rect x="4" y="4" width="26" height="24" rx="3" fill="#f15a22" transform="rotate(-14 17 16)"></rect>
        <text x="17" y="24" text-anchor="middle" font-size="26" font-weight="700" fill="#fff" font-family="Liberation Sans, sans-serif" transform="rotate(-8 17 16)">S</text>
      </svg>
    `
  }

  render() {
    return html`
      ${this._titlebar()}
      ${this._tabs()}
      <div class="ribbon">
        ${this._clipboard()}
        ${this._font()}
        ${this._paragraph()}
        ${this._styles()}
        ${this._editing()}
        ${this._save()}
        <svg class="collapse" width="10" height="6" viewBox="0 0 10 6"><path d="M1 5l4-4 4 4" fill="none" stroke="#555"></path></svg>
      </div>
      <div class="main">
        <div class="rulerline">
          <div class="corner"><span></span></div>
          ${this._hruler()}
        </div>
        <div class="work">
          ${this._vruler()}
          <div class="page">
            <span class="crop tl"></span>
            <span class="crop tr"></span>
            <span class="crop bl"></span>
            <span class="crop br"></span>
            ${DOC_LINES.map((l) => html`<div class="line">${l}</div>`)}
          </div>
        </div>
      </div>
      ${this._statusbar()}
      ${this._ime()}
      ${this._watermark()}
      <div class="redbox"></div>
      <svg class="arrow" width="130" height="145" viewBox="0 0 130 145">
        <path d="M16 14L108 116l6-5 6 26-24-11 4-2z" fill="#ff3a3a"></path>
      </svg>
      ${this._sogou()}
    `
  }
}

declare global {
  interface HTMLElementTagNameMap {
    'app-root': AppRoot
  }
}
